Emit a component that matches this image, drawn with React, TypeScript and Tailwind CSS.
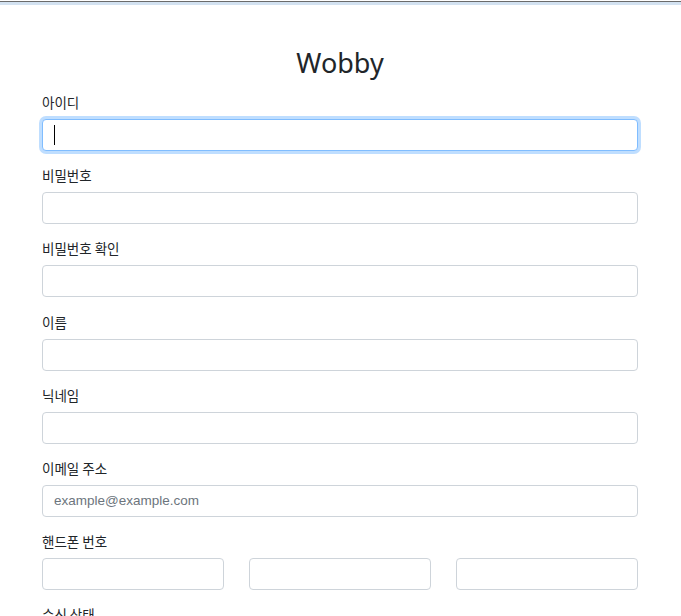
import React from "react";

const labelCls =
  "block text-[13.5px] leading-[20px] mb-[7px] text-[#212529]";
const inputCls =
  "block w-full h-[32px] mb-[14.2px] rounded-[4px] border border-[#ced4da] bg-white px-[11px] text-[13.5px] text-[#495057] outline-none placeholder:text-[#6c757d]";

function Field({ label, placeholder }: { label: string; placeholder?: string }) {
  return (
    <div>
      <label className={labelCls}>{label}</label>
      <input className={inputCls} placeholder={placeholder} style={{ fontFamily: "'Liberation Sans', Arial, sans-serif" }} />
    </div>
  );
}

export default function App() {
  return (
    <div
      className="min-h-[616px] bg-white text-[#212529]"
      style={{ fontFamily: "'Noto Sans', 'Noto Sans CJK KR', sans-serif" }}
    >
      <div className="h-[1px] bg-white" />
      <div className="h-[1px] bg-[#6b6b6b]" />
      <div className="h-[3px] bg-[#d3e2f1]" />
      <div className="ml-[42px] mr-[43px] pt-[41px]">
        <h1 className="text-center text-[27px] leading-[34px] mb-[12px] font-normal">Wobby</h1>
        <div style={{ fontFamily: "'Noto Sans CJK KR', sans-serif" }}>
          <div>
            <label className={labelCls}>아이디</label>
            <div className="relative">
              <input
                className="block w-full h-[32px] mb-[14.2px] rounded-[4px] border border-[#80bdff] bg-white px-[12px] outline-none shadow-[0_0_0_3px_rgba(0,123,255,0.25)]"
              />
              <span className="absolute left-[12px] top-[6px] h-[20px] w-[1px] bg-black" />
            </div>
          </div>
          <Field label="비밀번호" />
          <Field label="비밀번호 확인" />
          <Field label="이름" />
          <Field label="닉네임" />
          <Field label="이메일 주소" placeholder="example@example.com" />
          <div>
            <label className={labelCls}>핸드폰 번호</label>
            <div className="grid grid-cols-3 gap-[25px]">
              <input className={inputCls} />
              <input className={inputCls} />
              <input className={inputCls} />
            </div>
          </div>
          <div>
            <label className={labelCls}>수신 상태</label>
          </div>
        </div>
      </div>
    </div>
  );
}
